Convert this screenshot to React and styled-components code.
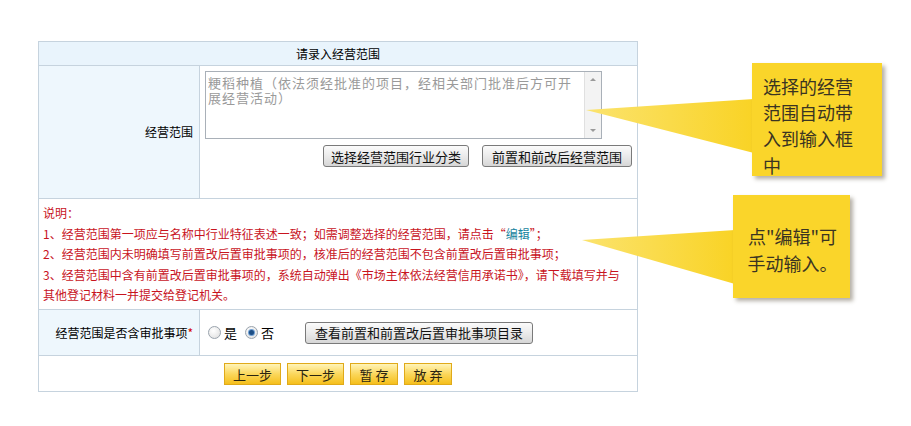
import React from "react";
import styled, { createGlobalStyle } from "styled-components";

const Global = createGlobalStyle`
  html, body { margin: 0; padding: 0; background: #ffffff; }
  body { font-family: "Noto Sans CJK SC", "Noto Sans", sans-serif; color: #000; }
  * { box-sizing: border-box; }
`;

const Page = styled.div`
  position: relative;
  width: 911px;
  height: 426px;
  overflow: hidden;
  padding: 41px 0 0 38px;
`;

const FormTable = styled.div`
  width: 600px;
  border: 1px solid #c6d3de;
  font-size: 12px;
  line-height: 1;
`;

const HeaderRow = styled.div`
  height: 23px;
  background: #e9f4fc;
  display: flex;
  align-items: center;
  justify-content: center;
  font-size: 12px;
`;

const Row = styled.div`
  display: grid;
  grid-template-columns: 161px 1fr;
  height: ${(p) => p.$h}px;
  border-top: 1px solid #c6d3de;
`;

const LabelCell = styled.div`
  background: #eef7fd;
  border-right: 1px solid #c6d3de;
  display: flex;
  align-items: center;
  justify-content: flex-end;
  padding-right: 6px;
  font-size: 12px;
  white-space: nowrap;
`;

const Star = styled.span`
  color: #d40000;
`;

const ValueCell = styled.div`
  display: flex;
  flex-direction: ${(p) => (p.$column ? "column" : "row")};
  align-items: ${(p) => (p.$column ? "flex-start" : "center")};
  padding: ${(p) => (p.$column ? "5px 5px 0 5px" : "0 0 0 8px")};
`;

const TextBox = styled.div`
  width: 397px;
  height: 68px;
  border: 1px solid #a9b0b8;
  display: flex;
  background: #fff;
`;

const TextContent = styled.div`
  flex: 1;
  padding: 3px 2px;
  color: #9a9a9a;
  font-size: 13px;
  letter-spacing: 1px;
  line-height: 15px;
`;

const ScrollTrack = styled.div`
  width: 17px;
  background: #f3f3f3;
  border-left: 1px solid #e0e0e0;
  display: flex;
  flex-direction: column;
  justify-content: space-between;
  align-items: center;
  padding: 6px 0;
`;

const Arrow = styled.span`
  width: 0;
  height: 0;
  border-left: 3px solid transparent;
  border-right: 3px solid transparent;
  ${(p) =>
    p.$down
      ? "border-top: 3px solid #9a9a9a;"
      : "border-bottom: 3px solid #9a9a9a;"}
`;

const ButtonBar = styled.div`
  align-self: stretch;
  display: flex;
  justify-content: flex-end;
  gap: 13px;
  margin-top: 6px;
`;

const GrayButton = styled.button`
  height: 22px;
  padding: 0 ${(p) => p.$pad || 9}px;
  border: 1px solid #7a7a7a;
  border-radius: 3px;
  background: linear-gradient(#fbfbfb, #e9e9e9 55%, #d6d6d6);
  font-family: inherit;
  font-size: 13px;
  color: #111;
  line-height: 1;
  display: flex;
  align-items: center;
  white-space: nowrap;
`;

const NotesRow = styled.div`
  height: 111px;
  border-top: 1px solid #c6d3de;
  padding: 4px 0 0 4px;
  color: #c8141e;
  font-size: 12px;
  line-height: 20.6px;
`;

const NoteLine = styled.div`
  white-space: nowrap;
`;

const LinkText = styled.span`
  color: #17849e;
`;

const RadioGroup = styled.div`
  display: flex;
  align-items: center;
  font-size: 13px;
`;

const RadioItem = styled.label`
  display: flex;
  align-items: center;
  gap: 3px;
  margin-right: ${(p) => p.$mr}px;
`;

const RadioDot = styled.span`
  width: 13px;
  height: 13px;
  border-radius: 50%;
  border: 1px solid #9aa3ad;
  background: radial-gradient(circle at 40% 35%, #ffffff, #dcdcdc);
  display: flex;
  align-items: center;
  justify-content: center;
  &::after {
    content: "";
    width: 5px;
    height: 5px;
    border-radius: 50%;
    background: ${(p) => (p.$checked ? "#1d4f86" : "transparent")};
    box-shadow: ${(p) => (p.$checked ? "0 0 0 1px #6f9fd3" : "none")};
  }
`;

const ActionRow = styled.div`
  height: 36px;
  border-top: 1px solid #c6d3de;
  display: flex;
  align-items: center;
  justify-content: center;
  gap: 6px;
  padding-top: 1px;
`;

const YellowButton = styled.button`
  width: ${(p) => p.$w}px;
  height: 22px;
  border: 1px solid #e0aa1a;
  background: linear-gradient(#fff4b8, #fbd75c 50%, #f5bf1c);
  font-family: inherit;
  font-size: 13px;
  color: #2a2410;
  padding: 0;
  line-height: 1;
`;

const Pointers = styled.svg`
  position: absolute;
  left: 0;
  top: 0;
  pointer-events: none;
`;

const Callout = styled.div`
  position: absolute;
  left: ${(p) => p.$x}px;
  top: ${(p) => p.$y}px;
  width: ${(p) => p.$w}px;
  height: ${(p) => p.$h}px;
  background: #fad52a;
  box-shadow: 3px 3px 4px rgba(90, 80, 60, 0.45);
  color: #3a3422;
  font-size: 18px;
  line-height: 26.2px;
  padding: ${(p) => p.$pad};
  display: flex;
  flex-direction: column;
  justify-content: ${(p) => (p.$center ? "center" : "flex-start")};
  align-items: ${(p) => (p.$center ? "center" : "flex-start")};
  white-space: nowrap;
`;

const CalloutLine = styled.span`
  display: block;
  height: 26.2px;
`;

export default function App() {
  return (
    <>
      <Global />
      <Page>
        <FormTable>
          <HeaderRow>请录入经营范围</HeaderRow>
          <Row $h={133}>
            <LabelCell>经营范围</LabelCell>
            <ValueCell $column>
              <TextBox>
                <TextContent>
                  粳稻种植（依法须经批准的项目，经相关部门批准后方可开展经营活动）
                </TextContent>
                <ScrollTrack>
                  <Arrow />
                  <Arrow $down />
                </ScrollTrack>
              </TextBox>
              <ButtonBar>
                <GrayButton $pad={7}>选择经营范围行业分类</GrayButton>
                <GrayButton $pad={9}>前置和前改后经营范围</GrayButton>
              </ButtonBar>
            </ValueCell>
          </Row>
          <NotesRow>
            <NoteLine>说明：</NoteLine>
            <NoteLine>
              1、经营范围第一项应与名称中行业特征表述一致；如需调整选择的经营范围，请点击“
              <LinkText>编辑</LinkText>”；
            </NoteLine>
            <NoteLine>
              2、经营范围内未明确填写前置改后置审批事项的，核准后的经营范围不包含前置改后置审批事项；
            </NoteLine>
            <NoteLine>
              3、经营范围中含有前置改后置审批事项的，系统自动弹出《市场主体依法经营信用承诺书》，请下载填写并与
            </NoteLine>
            <NoteLine>其他登记材料一并提交给登记机关。</NoteLine>
          </NotesRow>
          <Row $h={46}>
            <LabelCell>
              经营范围是否含审批事项<Star>*</Star>
            </LabelCell>
            <ValueCell>
              <RadioGroup>
                <RadioItem $mr={8}>
                  <RadioDot />是
                </RadioItem>
                <RadioItem $mr={31}>
                  <RadioDot $checked />否
                </RadioItem>
              </RadioGroup>
              <GrayButton $pad={9}>查看前置和前置改后置审批事项目录</GrayButton>
            </ValueCell>
          </Row>
          <ActionRow>
            <YellowButton $w={57}>上一步</YellowButton>
            <YellowButton $w={57}>下一步</YellowButton>
            <YellowButton $w={48}>暂 存</YellowButton>
            <YellowButton $w={48}>放 弃</YellowButton>
          </ActionRow>
        </FormTable>

        <Pointers width="911" height="426" viewBox="0 0 911 426">
          <defs>
            <linearGradient id="pg" x1="0" y1="0" x2="1" y2="0">
              <stop offset="0" stopColor="#fbe36e" />
              <stop offset="1" stopColor="#f9d325" />
            </linearGradient>
          </defs>
          <polygon points="586,110 754,99 754,153" fill="url(#pg)" />
          <polygon points="582,240 735,230 735,284" fill="url(#pg)" />
        </Pointers>

        <Callout $x={752} $y={63} $w={130} $h={113} $pad="10px 10px 0 11px">
          <CalloutLine>选择的经营</CalloutLine>
          <CalloutLine>范围自动带</CalloutLine>
          <CalloutLine>入到输入框</CalloutLine>
          <CalloutLine>中</CalloutLine>
        </Callout>
        <Callout $x={733} $y={195} $w={117} $h={103} $pad="6px 0 0 2px" $center>
          <CalloutLine>点"编辑"可</CalloutLine>
          <CalloutLine>手动输入。</CalloutLine>
        </Callout>
      </Page>
    </>
  );
}
